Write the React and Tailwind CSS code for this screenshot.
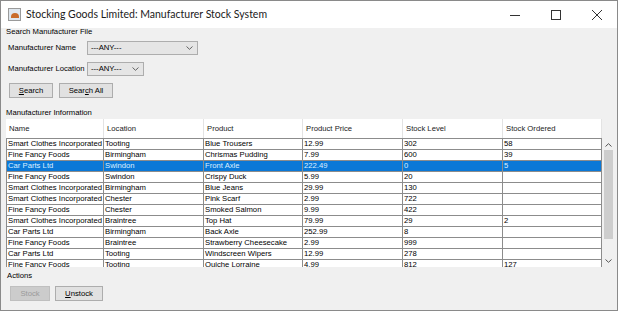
import React from "react";

const rows = [
  ["Smart Clothes Incorporated", "Tooting", "Blue Trousers", "12.99", "302", "58"],
  ["Fine Fancy Foods", "Birmingham", "Chrismas Pudding", "7.99", "600", "39"],
  ["Car Parts Ltd", "Swindon", "Front Axle", "222.49", "0", "5"],
  ["Fine Fancy Foods", "Swindon", "Crispy Duck", "5.99", "20", ""],
  ["Smart Clothes Incorporated", "Birmingham", "Blue Jeans", "29.99", "130", ""],
  ["Smart Clothes Incorporated", "Chester", "Pink Scarf", "2.99", "722", ""],
  ["Fine Fancy Foods", "Chester", "Smoked Salmon", "9.99", "422", ""],
  ["Smart Clothes Incorporated", "Braintree", "Top Hat", "79.99", "29", "2"],
  ["Car Parts Ltd", "Birmingham", "Back Axle", "252.99", "8", ""],
  ["Fine Fancy Foods", "Braintree", "Strawberry Cheesecake", "2.99", "999", ""],
  ["Car Parts Ltd", "Tooting", "Windscreen Wipers", "12.99", "278", ""],
  ["Fine Fancy Foods", "Tooting", "Quiche Lorraine", "4.99", "812", "127"],
];
const headers = ["Name", "Location", "Product", "Product Price", "Stock Level", "Stock Ordered"];
const widths = [98, 100, 99, 100, 100, 99];

function Combo({ w }) {
  return (
    <div
      className="h-[14px] border border-[#adadad] bg-[#e5e5e5] flex items-center justify-between pl-[3px] pr-[4px]"
      style={{ width: w }}
    >
      <span className="leading-none">---ANY---</span>
      <svg width="7" height="4" viewBox="0 0 7 4">
        <path d="M0.5 0.5 L3.5 3.3 L6.5 0.5" stroke="#555" fill="none" strokeWidth="0.9" />
      </svg>
    </div>
  );
}

function Btn({ children, w, disabled }) {
  return (
    <div
      className={`h-[15px] border flex items-center justify-center leading-none ${
        disabled ? "border-[#bfbfbf] bg-[#cccccc] text-[#9a9a9a]" : "border-[#adadad] bg-[#e1e1e1] text-black"
      }`}
      style={{ width: w }}
    >
      {children}
    </div>
  );
}

export default function App() {
  return (
    <div className="w-[619px] h-[312px] bg-white">
      <div
        className="w-[618px] h-[311px] border border-[#8a8a8a] bg-[#f0f0f0] flex flex-col text-[7.7px] text-black whitespace-nowrap"
        style={{ fontFamily: "'Liberation Sans', Arial, sans-serif" }}
      >
        {/* Title bar */}
        <div className="h-[27px] bg-white flex items-center shrink-0">
          <div className="ml-[7px] w-[13px] h-[13px] border border-[#9a9a9a] bg-[#dfe7ee] flex items-end justify-center">
            <div className="w-[8px] h-[5px] bg-[#c96b2a] rounded-t-sm mb-[2px]" />
          </div>
          <div
            className="ml-[5px] text-[10.5px] text-[#1a1a1a] leading-none"
            style={{ fontFamily: "Lato, 'Open Sans', sans-serif" }}
          >
            Stocking Goods Limited: Manufacturer Stock System
          </div>
          <div className="flex-1" />
          <div className="flex items-center">
            <svg width="10" height="10" viewBox="0 0 10 10" className="mr-[31px]">
              <path d="M0 5.5 H10" stroke="#333" strokeWidth="1" />
            </svg>
            <svg width="10" height="10" viewBox="0 0 10 10" className="mr-[31px]">
              <rect x="0.5" y="0.5" width="9" height="9" stroke="#333" fill="none" strokeWidth="1" />
            </svg>
            <svg width="10" height="10" viewBox="0 0 10 10" className="mr-[15px]">
              <path d="M0 0 L10 10 M10 0 L0 10" stroke="#333" strokeWidth="1" />
            </svg>
          </div>
        </div>

        {/* Search section */}
        <div className="pl-[5px]">
          <div className="h-[10px] leading-[10px] mt-[-1px]">Search Manufacturer File</div>
          <div className="flex items-center mt-[4px] pl-[2px]">
            <span className="w-[79px] leading-none">Manufacturer Name</span>
            <Combo w={111} />
          </div>
          <div className="flex items-center mt-[7px] pl-[2px]">
            <span className="w-[79px] leading-none">Manufacturer Location</span>
            <Combo w={57} />
          </div>
          <div className="flex items-center gap-[6px] mt-[7px] pl-[3px]">
            <Btn w={44}>
              <span><u>S</u>earch</span>
            </Btn>
            <Btn w={54}>
              <span>Sear<u>c</u>h All</span>
            </Btn>
          </div>
        </div>

        {/* Information section */}
        <div className="pl-[5px] mt-[10px]">
          <div className="h-[10px] leading-[10px]">Manufacturer Information</div>
          <div className="flex mt-[1px] h-[148px] overflow-hidden">
            <div className="w-[596px] flex flex-col">
              <div className="flex h-[19px] bg-white shrink-0">
                {headers.map((h, i) => (
                  <div
                    key={h}
                    className="border-r border-[#e3e3e3] flex items-center pl-[3px] text-[#222] leading-none"
                    style={{ width: widths[i] }}
                  >
                    {h}
                  </div>
                ))}
              </div>
              <div className="border-t border-l border-[#8c8c8c] bg-white">
                {rows.map((r, ri) => {
                  const sel = ri === 2;
                  return (
                    <div
                      key={ri}
                      className={`flex h-[11px] border-b border-[#8c8c8c] ${sel ? "bg-[#0a78d7] text-[#dcefff]" : ""}`}
                    >
                      {r.map((c, ci) => (
                        <div
                          key={ci}
                          className="border-r border-[#8c8c8c] pl-[1px] leading-[10px] overflow-hidden"
                          style={{ width: ci === 0 ? widths[ci] - 1 : widths[ci] }}
                        >
                          {c}
                        </div>
                      ))}
                    </div>
                  );
                })}
              </div>
            </div>
            {/* Scrollbar */}
            <div className="w-[13px] flex flex-col">
              <div className="h-[20px] shrink-0" />
              <div className="flex-1 bg-[#f0f0f0] flex flex-col items-center">
                <div className="h-[11px] flex items-center justify-center">
                  <svg width="7" height="4" viewBox="0 0 7 4">
                    <path d="M0.5 3.5 L3.5 0.7 L6.5 3.5" stroke="#555" fill="none" strokeWidth="1" />
                  </svg>
                </div>
                <div className="w-[9px] h-[89px] bg-[#cdcdcd]" />
                <div className="flex-1" />
                <div className="h-[13px] flex items-center justify-center">
                  <svg width="7" height="4" viewBox="0 0 7 4">
                    <path d="M0.5 0.5 L3.5 3.3 L6.5 0.5" stroke="#555" fill="none" strokeWidth="1" />
                  </svg>
                </div>
              </div>
            </div>
          </div>
        </div>

        {/* Actions */}
        <div className="pl-[6px] mt-[4px]">
          <div className="h-[10px] leading-[10px]">Actions</div>
          <div className="flex gap-[5px] mt-[5px] pl-[3px]">
            <Btn w={40} disabled>
              Stock
            </Btn>
            <Btn w={48}>
              <span><u>U</u>nstock</span>
            </Btn>
          </div>
        </div>
      </div>
    </div>
  );
}
